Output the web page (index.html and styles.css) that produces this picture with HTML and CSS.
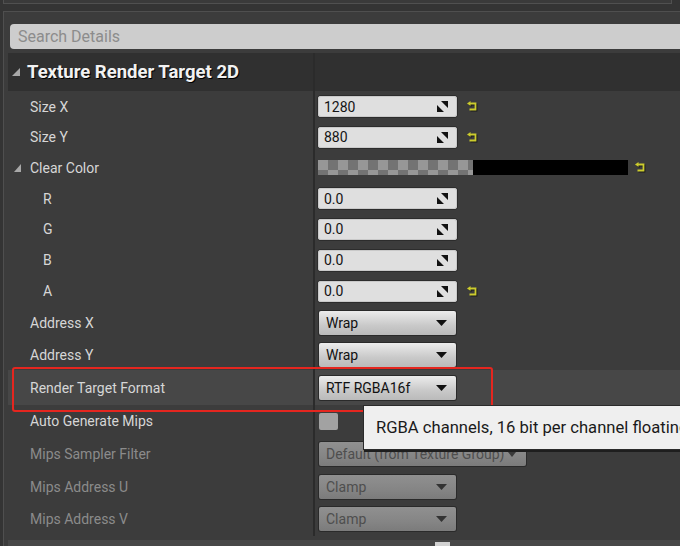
FILE: index.html
```html
<!DOCTYPE html>
<html>
<head>
<meta charset="utf-8">
<link rel="stylesheet" href="styles.css">
</head>
<body>
<div class="top-panel"></div>
<div class="panel">
  <div class="search">Search Details</div>
  <div class="details">
    <div class="category">
      <div class="name cat-name"><span class="tri tri-lg"></span><span class="cat-title">Texture Render Target 2D</span></div>
      <div class="value"></div>
    </div>

    <div class="row h31">
      <div class="name"><span class="label">Size X</span></div>
      <div class="value">
        <div class="num"><span>1280</span><svg class="spin" width="11" height="11" viewBox="0 0 11 11"><path d="M4 0H11V7Z M0 4V11H7Z" fill="#111"/></svg></div>
        <svg class="reset" width="12" height="11" viewBox="0 0 12 11"><g transform="translate(1 1)"><polygon points="0,2.5 3.5,0 3.5,5" fill="#1a1a1a"/><path d="M3 2.5H8.5V8.5H2.5" fill="none" stroke="#1a1a1a" stroke-width="1.8"/></g><polygon points="0,2.5 3.5,0 3.5,5" fill="#cccc2e"/><path d="M3 2.5H8.5V8.5H2.5" fill="none" stroke="#cccc2e" stroke-width="1.8"/></svg>
      </div>
    </div>

    <div class="row h30">
      <div class="name"><span class="label">Size Y</span></div>
      <div class="value">
        <div class="num"><span>880</span><svg class="spin" width="11" height="11" viewBox="0 0 11 11"><path d="M4 0H11V7Z M0 4V11H7Z" fill="#111"/></svg></div>
        <svg class="reset" width="12" height="11" viewBox="0 0 12 11"><g transform="translate(1 1)"><polygon points="0,2.5 3.5,0 3.5,5" fill="#1a1a1a"/><path d="M3 2.5H8.5V8.5H2.5" fill="none" stroke="#1a1a1a" stroke-width="1.8"/></g><polygon points="0,2.5 3.5,0 3.5,5" fill="#cccc2e"/><path d="M3 2.5H8.5V8.5H2.5" fill="none" stroke="#cccc2e" stroke-width="1.8"/></svg>
      </div>
    </div>

    <div class="row h31">
      <div class="name group-name"><span class="tri tri-sm"></span><span class="label">Clear Color</span></div>
      <div class="value">
        <div class="swatch"><div class="checker"></div><div class="solid"></div></div>
        <svg class="reset reset-swatch" width="12" height="11" viewBox="0 0 12 11"><g transform="translate(1 1)"><polygon points="0,2.5 3.5,0 3.5,5" fill="#1a1a1a"/><path d="M3 2.5H8.5V8.5H2.5" fill="none" stroke="#1a1a1a" stroke-width="1.8"/></g><polygon points="0,2.5 3.5,0 3.5,5" fill="#cccc2e"/><path d="M3 2.5H8.5V8.5H2.5" fill="none" stroke="#cccc2e" stroke-width="1.8"/></svg>
      </div>
    </div>

    <div class="row h31">
      <div class="name sub"><span class="label">R</span></div>
      <div class="value">
        <div class="num"><span>0.0</span><svg class="spin" width="11" height="11" viewBox="0 0 11 11"><path d="M4 0H11V7Z M0 4V11H7Z" fill="#111"/></svg></div>
      </div>
    </div>

    <div class="row h30">
      <div class="name sub"><span class="label">G</span></div>
      <div class="value">
        <div class="num"><span>0.0</span><svg class="spin" width="11" height="11" viewBox="0 0 11 11"><path d="M4 0H11V7Z M0 4V11H7Z" fill="#111"/></svg></div>
      </div>
    </div>

    <div class="row h32">
      <div class="name sub"><span class="label">B</span></div>
      <div class="value">
        <div class="num"><span>0.0</span><svg class="spin" width="11" height="11" viewBox="0 0 11 11"><path d="M4 0H11V7Z M0 4V11H7Z" fill="#111"/></svg></div>
      </div>
    </div>

    <div class="row h30">
      <div class="name sub"><span class="label">A</span></div>
      <div class="value">
        <div class="num"><span>0.0</span><svg class="spin" width="11" height="11" viewBox="0 0 11 11"><path d="M4 0H11V7Z M0 4V11H7Z" fill="#111"/></svg></div>
        <svg class="reset" width="12" height="11" viewBox="0 0 12 11"><g transform="translate(1 1)"><polygon points="0,2.5 3.5,0 3.5,5" fill="#1a1a1a"/><path d="M3 2.5H8.5V8.5H2.5" fill="none" stroke="#1a1a1a" stroke-width="1.8"/></g><polygon points="0,2.5 3.5,0 3.5,5" fill="#cccc2e"/><path d="M3 2.5H8.5V8.5H2.5" fill="none" stroke="#cccc2e" stroke-width="1.8"/></svg>
      </div>
    </div>

    <div class="row h33">
      <div class="name"><span class="label">Address X</span></div>
      <div class="value">
        <div class="combo"><span>Wrap</span><svg width="11" height="6" viewBox="0 0 11 6"><polygon points="0,0 11,0 5.5,6" fill="#111"/></svg></div>
      </div>
    </div>

    <div class="row h31">
      <div class="name"><span class="label">Address Y</span></div>
      <div class="value">
        <div class="combo"><span>Wrap</span><svg width="11" height="6" viewBox="0 0 11 6"><polygon points="0,0 11,0 5.5,6" fill="#111"/></svg></div>
      </div>
    </div>

    <div class="row h35 hl">
      <div class="name"><span class="label">Render Target Format</span></div>
      <div class="value">
        <div class="combo"><span>RTF RGBA16f</span><svg width="11" height="6" viewBox="0 0 11 6"><polygon points="0,0 11,0 5.5,6" fill="#111"/></svg></div>
      </div>
    </div>

    <div class="row h32">
      <div class="name"><span class="label">Auto Generate Mips</span></div>
      <div class="value">
        <div class="check"></div>
      </div>
    </div>

    <div class="row h34">
      <div class="name"><span class="label dim">Mips Sampler Filter</span></div>
      <div class="value">
        <div class="combo dis wide"><span>Default (from Texture Group)</span><svg width="8" height="5" viewBox="0 0 8 5"><polygon points="0,0 8,0 4,5" fill="#3a3a3a"/></svg></div>
      </div>
    </div>

    <div class="row h31">
      <div class="name"><span class="label dim">Mips Address U</span></div>
      <div class="value">
        <div class="combo dis"><span>Clamp</span><svg width="11" height="6" viewBox="0 0 11 6"><polygon points="0,0 11,0 5.5,6" fill="#333"/></svg></div>
      </div>
    </div>

    <div class="row h34">
      <div class="name"><span class="label dim">Mips Address V</span></div>
      <div class="value">
        <div class="combo dis"><span>Clamp</span><svg width="11" height="6" viewBox="0 0 11 6"><polygon points="0,0 11,0 5.5,6" fill="#333"/></svg></div>
      </div>
    </div>
  </div>
  <div class="bottom-bar"><span class="grip"></span></div>
</div>

<div class="annot"></div>
<div class="tooltip">RGBA channels, 16 bit per channel floating point, range [-65504, 65504]</div>
</body>
</html>
```

FILE: styles.css
```css
* { box-sizing: border-box; }
html, body { margin: 0; padding: 0; }
body {
  width: 680px;
  height: 546px;
  overflow: hidden;
  position: relative;
  background: #343434;
  font-family: Roboto, "Noto Sans", sans-serif;
}

.top-panel {
  margin-left: 3px;
  width: 669px;
  height: 4px;
  background: #3a3a3a;
  border-left: 1px solid #505050;
  border-right: 1px solid #505050;
  border-bottom: 1px solid #505050;
  margin-bottom: 7px;
}

.panel {
  margin-left: 3px;
  height: 535px;
  background: #3c3c3c;
  border-left: 1px solid #4f4f4f;
  border-top: 1px solid #4f4f4f;
  padding-top: 12px;
}

.search {
  margin-left: 6px;
  height: 25px;
  border-radius: 4px 0 0 4px;
  background: #cdcdcd;
  color: #8c8c8c;
  font-size: 16px;
  line-height: 25px;
  padding-left: 8px;
}

.details {
  margin: 4px 0 0 4px;
}

.category {
  display: flex;
  height: 38px;
  background: #303030;
}

.row { display: flex; }
.h30 { height: 30px; }
.h31 { height: 31px; }
.h32 { height: 32px; }
.h33 { height: 33px; }
.h34 { height: 34px; }
.h35 { height: 35px; }
.hl { background: #474747; }

.name {
  width: 305px;
  flex: none;
  display: flex;
  align-items: center;
  padding-left: 22px;
}
.name.sub { padding-left: 35px; }
.name.group-name { padding-left: 6px; }
.name.cat-name { padding-left: 4px; }

.value {
  flex: 1;
  display: flex;
  align-items: center;
  border-left: 2px solid #2b2b2b;
  padding-left: 3px;
}

.label {
  font-size: 14px;
  color: #d6d6d6;
  white-space: nowrap;
}
.label.dim { color: #8b8b8b; }

.tri {
  width: 0;
  height: 0;
  border-style: solid;
  border-color: transparent;
}
.tri-lg {
  border-width: 0 0 8px 8px;
  border-bottom-color: #a8a8a8;
  margin-right: 7px;
}
.tri-sm {
  border-width: 0 0 8px 7px;
  border-bottom-color: #a8a8a8;
  margin-right: 9px;
}

.cat-title {
  font-size: 18.5px;
  font-weight: 700;
  color: #f2f2f2;
  text-shadow: 1px 1px 0 #000;
  white-space: nowrap;
}

.num {
  width: 139px;
  height: 21px;
  background: #dfdfdf;
  border-radius: 3px;
  box-shadow: inset 0 0 0 1px #c9c9c9, 0 0 0 1px #2c2c2c;
  display: flex;
  align-items: center;
  justify-content: space-between;
  padding: 0 9px 0 6px;
  font-size: 14px;
  color: #141414;
}

.reset { margin-left: 10px; }
.reset-swatch { margin-left: 7px; }

.swatch {
  width: 310px;
  height: 15px;
  display: flex;
}
.checker {
  width: 155px;
  background: repeating-conic-gradient(#737373 0 25%, #979797 0 50%) 0 0 / 20px 20px;
}
.solid {
  width: 155px;
  background: #000;
}

.combo {
  width: 137px;
  height: 24px;
  margin-left: 1px;
  border-radius: 2px;
  background: linear-gradient(#ececec, #c9c9c9 60%, #bababa);
  box-shadow: 0 0 0 1px #2a2a2a;
  display: flex;
  align-items: center;
  justify-content: space-between;
  padding: 0 9px 0 7px;
  font-size: 14px;
  color: #111;
  white-space: nowrap;
}
.combo.dis {
  background: linear-gradient(#909090, #858585 60%, #7b7b7b);
  color: #4e4e4e;
}
.combo.wide {
  width: 207px;
  justify-content: flex-start;
  gap: 4px;
}

.check {
  width: 19px;
  height: 17px;
  margin-left: 1px;
  border-radius: 2px;
  background: #a2a2a2;
}

.bottom-bar {
  margin: 4px 0 0 4px;
  height: 10px;
  background: #474747;
  padding-left: 427px;
  padding-top: 2px;
  display: flex;
}
.grip {
  width: 15px;
  height: 6px;
  background: #d2d2d2;
}

.annot {
  position: absolute;
  left: 12px;
  top: 367px;
  width: 481px;
  height: 45px;
  border: 2px solid #e5261f;
  border-radius: 3px;
}

.tooltip {
  position: absolute;
  left: 363px;
  top: 405px;
  width: 340px;
  height: 45px;
  background: #efefef;
  border: 1px solid #2a2a2a;
  box-shadow: 1px 2px 0 #1e1e1e;
  padding-left: 12px;
  font-size: 16.6px;
  line-height: 43px;
  color: #1a1a1a;
  white-space: nowrap;
  overflow: hidden;
}
```
